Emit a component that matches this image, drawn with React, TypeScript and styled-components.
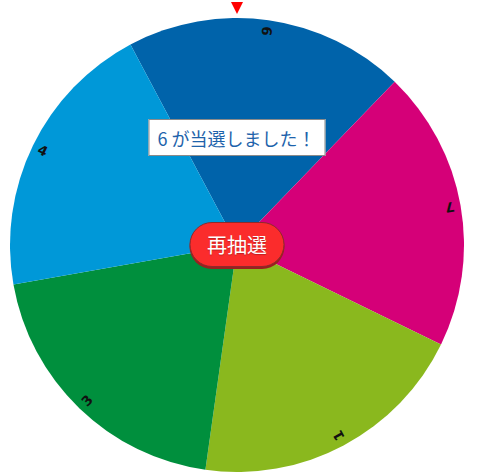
import React from "react";
import styled, { createGlobalStyle } from "styled-components";

const GlobalStyle = createGlobalStyle`
  html, body {
    margin: 0;
    padding: 0;
    background: #ffffff;
  }
  body {
    font-family: "Liberation Sans", "Noto Sans CJK JP", sans-serif;
  }
`;

const Stage = styled.main`
  width: 479px;
  height: 472px;
  overflow: hidden;
  padding-left: 10px;
  box-sizing: border-box;
`;

const Column = styled.div`
  width: 454px;
  display: flex;
  flex-direction: column;
  align-items: center;
`;

const Pointer = styled.div`
  width: 0;
  height: 0;
  margin-top: 2px;
  border-left: 6px solid transparent;
  border-right: 6px solid transparent;
  border-top: 12px solid #ff0000;
`;

const WheelArea = styled.div`
  position: relative;
  width: 454px;
  height: 454px;
  margin-top: 4px;
`;

const WheelSvg = styled.svg`
  display: block;
  width: 454px;
  height: 454px;
`;

const SliceLabel = styled.text`
  font-family: "DejaVu Sans", "Liberation Sans", sans-serif;
  font-size: 13.5px;
  font-weight: bold;
  fill: #111111;
`;

const ResultBox = styled.div`
  position: absolute;
  top: 101px;
  left: 50%;
  transform: translateX(-50%);
  box-sizing: border-box;
  height: 37px;
  padding: 0 9px 0 8px;
  display: flex;
  align-items: center;
  background: #ffffff;
  border: 1px solid #8a8a8a;
  color: #1e63ab;
  font-family: "Noto Sans CJK JP", "Liberation Sans", sans-serif;
  font-size: 18px;
  white-space: nowrap;
`;

const RedrawButton = styled.button`
  position: absolute;
  top: 204px;
  left: 50%;
  transform: translateX(-50%);
  box-sizing: border-box;
  width: 95px;
  height: 45px;
  padding: 0;
  border: 1px solid #8e2a2a;
  border-radius: 23px;
  background: #fb2c2c;
  box-shadow: 0 2px 0 #9a2020;
  color: #ffffff;
  font-family: "Noto Sans CJK JP", "Liberation Sans", sans-serif;
  font-size: 20px;
  text-shadow: 0 1px 1px rgba(0, 0, 0, 0.25);
  cursor: pointer;
`;

type Slice = { label: string; color: string };

const slices: Slice[] = [
  { label: "6", color: "#0063aa" },
  { label: "7", color: "#d50078" },
  { label: "1", color: "#8ab81e" },
  { label: "3", color: "#008f3d" },
  { label: "4", color: "#0098d8" },
];

const R = 227;
const C = 227;
const START = -28;
const LABEL_R = 216;

const pt = (deg: number, r: number) => {
  const a = (deg * Math.PI) / 180;
  return [C + r * Math.sin(a), C - r * Math.cos(a)];
};

const Wheel: React.FC = () => {
  const step = 360 / slices.length;
  return (
    <WheelSvg viewBox="0 0 454 454">
      {slices.map((s, i) => {
        const a0 = START + i * step;
        const a1 = a0 + step;
        const [x0, y0] = pt(a0, R);
        const [x1, y1] = pt(a1, R);
        return (
          <path
            key={`p${s.label}`}
            d={`M${C},${C} L${x0},${y0} A${R},${R} 0 0 1 ${x1},${y1} Z`}
            fill={s.color}
          />
        );
      })}
      {slices.map((s, i) => {
        const mid = START + i * step + step / 2;
        const [x, y] = pt(mid, LABEL_R);
        // labels run along the radius, reading from the rim toward the hub
        return (
          <SliceLabel
            key={`t${s.label}`}
            textAnchor="middle"
            dominantBaseline="central"
            transform={`translate(${x} ${y}) rotate(${mid + 90})`}
          >
            {s.label}
          </SliceLabel>
        );
      })}
    </WheelSvg>
  );
};

export default function App() {
  return (
    <>
      <GlobalStyle />
      <Stage>
        <Column>
          <Pointer />
          <WheelArea>
            <Wheel />
            <ResultBox>6 が当選しました！</ResultBox>
            <RedrawButton type="button">再抽選</RedrawButton>
          </WheelArea>
        </Column>
      </Stage>
    </>
  );
}
